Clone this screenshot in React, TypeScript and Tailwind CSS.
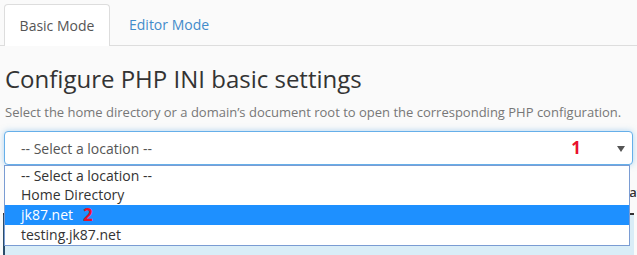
import React from "react";

export default function App() {
  return (
    <div
      className="w-[637px] h-[255px] bg-[#fafafa] overflow-hidden relative text-[#333]"
      style={{ fontFamily: '"Open Sans", "Noto Sans", sans-serif' }}
    >
      {/* Tabs */}
      <div className="flex pt-[4px] pl-[4px] border-b border-[#ddd] h-[46px]">
        <div className="w-[106px] h-[42px] bg-white border border-[#ddd] border-b-0 rounded-t-[4px] flex items-center justify-center text-[14px] text-[#555] -mb-px">
          Basic Mode
        </div>
        <div className="h-[41px] px-[19px] flex items-center text-[14px] text-[#428bca]">
          Editor Mode
        </div>
      </div>

      {/* Heading */}
      <h1 className="pl-[5px] mt-[17px] text-[24px] leading-[32px] text-[#333]">
        Configure PHP INI basic settings
      </h1>
      <p className="pl-[5px] mt-[8px] text-[13px] leading-[18px] text-[#777]">
        Select the home directory or a domain’s document root to open the corresponding PHP configuration.
      </p>

      {/* Select */}
      <div className="mx-[4px] mt-[10px] h-[34px] bg-white border border-[#66afe9] rounded-[4px] shadow-[0_0_6px_rgba(102,175,233,0.5)] flex items-center pl-[16px] pr-[7px] text-[14px] text-[#555] relative">
        <span className="flex-1">-- Select a location --</span>
        <span className="text-[#e8112d] font-bold text-[17px] mr-[36px]">1</span>
        <svg width="8" height="6" viewBox="0 0 8 6" className="mt-[1px]">
          <path d="M0 0 L8 0 L4 6 Z" fill="#555" />
        </svg>
      </div>

      {/* Background content behind dropdown */}
      <div className="mx-[3px] mt-[18px] relative">
        <div className="h-[30px] flex justify-end text-[13px] text-[#333] font-semibold">
          <span className="-mr-[8px]">at</span>
        </div>
        <div className="h-[2px] bg-[#333]" />
        <div className="h-[40px] bg-[#d9edf7] border-l-2 border-[#2a4c6a]" />
      </div>

      {/* Dropdown list */}
      <div className="absolute left-[4px] top-[165px] w-[626px] bg-white border border-[#7a9cd3] text-[14px] text-[#333] leading-[20px]">
        <div className="h-[19px] pl-[16px] leading-[19px]">-- Select a location --</div>
        <div className="h-[20px] pl-[16px]">Home Directory</div>
        <div className="h-[20px] pl-[16px] bg-[#1e90ff] text-white flex items-center">
          <span>jk87.net</span>
          <span className="ml-[10px] text-[#e8112d] font-bold text-[17px]">2</span>
        </div>
        <div className="h-[20px] pl-[16px]">testing.jk87.net</div>
      </div>
    </div>
  );
}
